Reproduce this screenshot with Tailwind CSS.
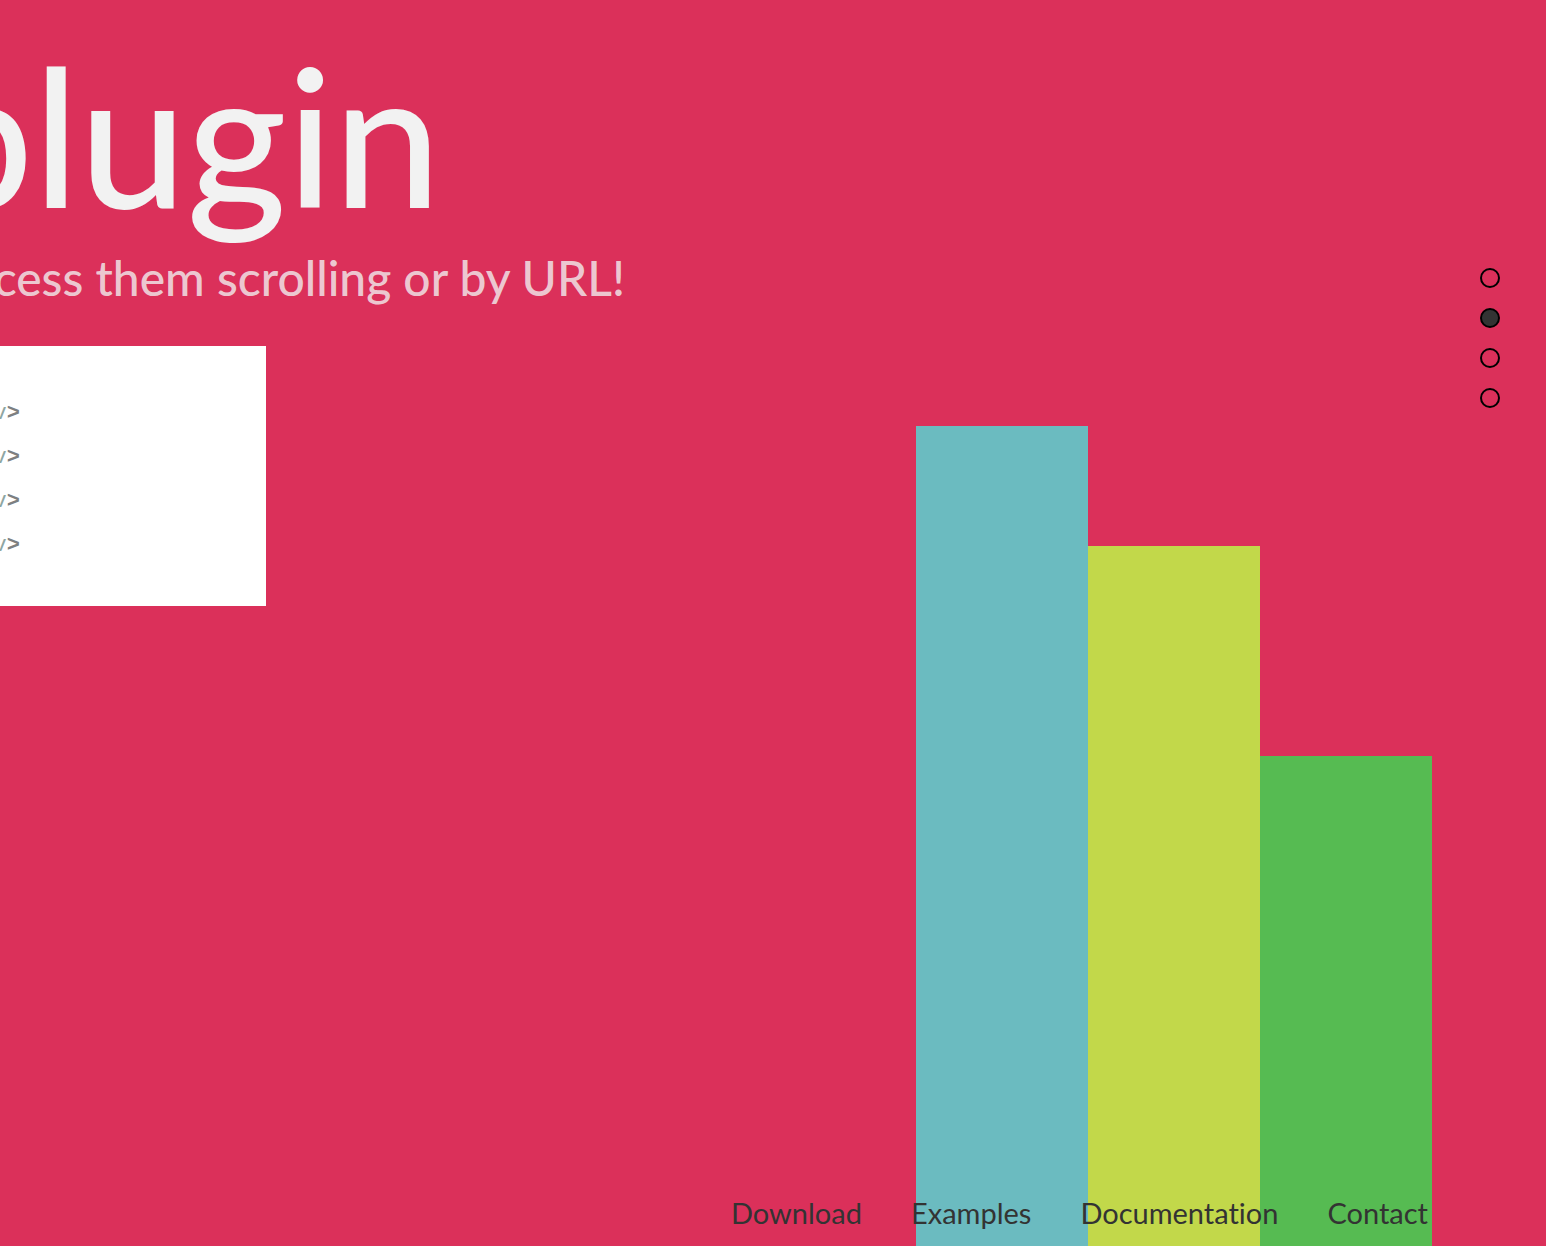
<!DOCTYPE html>
<html lang="en">
<head>
<meta charset="utf-8">
<title>Plugin</title>
<script src="https://cdn.jsdelivr.net/npm/@tailwindcss/browser@4"></script>
</head>
<body class="bg-[#db305a] font-['Lato',sans-serif] text-[#333] [font-variant-ligatures:none]">
<main class="relative flex min-h-screen justify-between overflow-hidden">
  <section class="min-w-0 flex-1 pt-6">
    <h1 class="flex w-[441px] justify-end whitespace-nowrap text-[192px] leading-[220px] font-medium text-[#f2f2f2]">plugin</h1>
    <p class="mt-1 flex w-[625px] justify-end whitespace-nowrap text-5xl leading-[60px] font-medium text-[#f2f2f2]/80">access them scrolling or by URL!</p>
    <pre class="mt-[38px] flex w-[266px] flex-col bg-white pt-[46px] pb-[38px] font-['Liberation_Mono',monospace] text-[22px] leading-[44px] text-[#7d8081]"><code class="flex w-5 justify-end font-['Liberation_Mono',monospace]"><span class="text-[#8fa6a3]">&lt;/div</span><span class="font-bold">&gt;</span></code><code class="flex w-5 justify-end font-['Liberation_Mono',monospace]"><span class="text-[#8fa6a3]">&lt;/div</span><span class="font-bold">&gt;</span></code><code class="flex w-5 justify-end font-['Liberation_Mono',monospace]"><span class="text-[#8fa6a3]">&lt;/div</span><span class="font-bold">&gt;</span></code><code class="flex w-5 justify-end font-['Liberation_Mono',monospace]"><span class="text-[#8fa6a3]">&lt;/div</span><span class="font-bold">&gt;</span></code></pre>
  </section>
  <div class="mr-[114px] flex shrink-0" aria-hidden="true">
    <div class="mt-[426px] w-[172px] bg-[#6bbbc0]"></div>
    <div class="mt-[546px] w-[172px] bg-[#c2d84a]"></div>
    <div class="mt-[756px] w-[172px] bg-[#56bb52]"></div>
  </div>
  <nav aria-label="Sections" class="absolute top-[268px] right-[46px] flex flex-col gap-5">
    <a href="#section-1" aria-label="Section 1" class="size-5 rounded-full border-2 border-black"></a>
    <a href="#section-2" aria-label="Section 2" class="size-5 rounded-full border-2 border-black bg-[#333]"></a>
    <a href="#section-3" aria-label="Section 3" class="size-5 rounded-full border-2 border-black"></a>
    <a href="#section-4" aria-label="Section 4" class="size-5 rounded-full border-2 border-black"></a>
  </nav>
  <nav aria-label="Main" class="absolute right-[118px] bottom-[13px] flex gap-[49px] text-[29px] leading-10">
    <a href="#download">Download</a>
    <a href="#examples">Examples</a>
    <a href="#documentation">Documentation</a>
    <a href="#contact">Contact</a>
  </nav>
</main>
</body>
</html>
